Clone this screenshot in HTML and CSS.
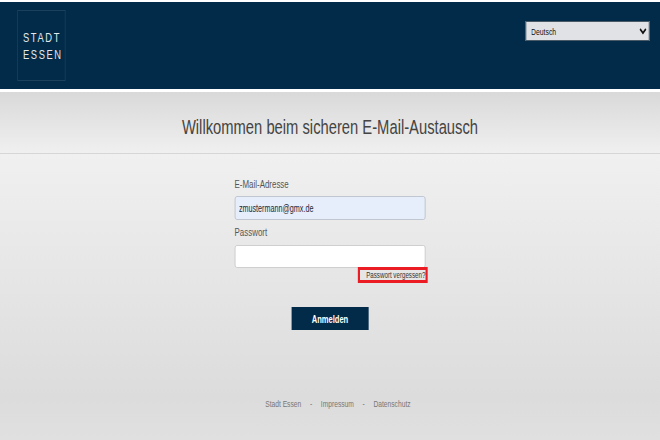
FILE: index.html
```html
<!DOCTYPE html>
<html>
<head>
    <meta charset="utf-8">
    <title>Stadt Essen - Sicherer E-Mail-Austausch</title>
    <link rel="stylesheet" href="styles.css">
</head>
<body>
<div class="page">
    <header class="header">
        <div class="logo">
            <span>STADT</span>
            <span>ESSEN</span>
        </div>
        <select class="language">
            <option>Deutsch</option>
        </select>
    </header>
    <main class="content">
        <h1 class="title">Willkommen beim sicheren E-Mail-Austausch</h1>
        <form class="login">
            <label class="label" for="email">E-Mail-Adresse</label>
            <input class="field field-filled" id="email" type="text" value="zmustermann@gmx.de">
            <label class="label label-password" for="password">Passwort</label>
            <input class="field field-password" id="password" type="password">
            <div class="forgot-row">
                <a class="forgot" href="#">Passwort vergessen?</a>
            </div>
            <button class="submit" type="button">Anmelden</button>
        </form>
        <footer class="footer">
            <a href="#">Stadt Essen</a>
            <span>-</span>
            <a href="#">Impressum</a>
            <span>-</span>
            <a href="#">Datenschutz</a>
        </footer>
    </main>
</div>
</body>
</html>
```

FILE: styles.css
```css
* {
    box-sizing: border-box;
}
html, body {
    width: 660px;
    height: 440px;
    overflow: hidden;
}
body {
    margin: 0;
    background: #fff;
    font-family: "Liberation Sans", Arial, sans-serif;
}
/* the whole shot is squeezed horizontally, so the page is wider and gets scaled */
.page {
    display: flex;
    flex-direction: column;
    width: 916.6px;
    height: 440px;
    transform: scaleX(.72);
    transform-origin: 0 0;
}
.header {
    flex: none;
    display: flex;
    justify-content: space-between;
    align-items: flex-start;
    height: 87px;
    margin-top: 2px;
    padding: 8px 15px 0 24px;
    background: #012b49;
}
.logo {
    display: flex;
    flex-direction: column;
    justify-content: center;
    gap: 3.5px;
    width: 67px;
    height: 71px;
    padding: 1px 0 0 7px;
    border: 1px solid #1b415d;
    color: #e3e8ec;
    font-size: 13px;
    line-height: 13px;
    letter-spacing: 2.2px;
}
.language {
    width: 172px;
    height: 20px;
    margin-top: 11px;
    padding: 0 0 0 3px;
    border: 1px solid #4a5a66;
    border-radius: 0;
    background: #e1e2e6;
    color: #111;
    font-family: "Liberation Sans", Arial, sans-serif;
    font-size: 9.5px;
}
.content {
    flex: 1;
    display: flex;
    flex-direction: column;
    align-items: center;
    margin-top: 3px;
    background: linear-gradient(to bottom, #d9d9d9 0, #f0f0f0 62px, #dcdcdc 305px, #e0e0e0 100%);
}
.title {
    align-self: stretch;
    height: 62px;
    margin: 0;
    padding-top: 23px;
    border-bottom: 1px solid #d6d6d6;
    color: #444;
    font-size: 20.5px;
    font-weight: normal;
    line-height: 24px;
    text-align: center;
}
.login {
    display: flex;
    flex-direction: column;
    width: 265px;
    margin-top: 24px;
}
.label {
    color: #555;
    font-size: 11px;
    line-height: 13px;
}
.label-password {
    margin-top: 6px;
}
.field {
    width: 265px;
    height: 24px;
    margin-top: 5px;
    padding: 0 5px;
    border: 1px solid #c8c8c8;
    border-radius: 3px;
    background: #fff;
    color: #1a2a3a;
    font-family: "Liberation Sans", Arial, sans-serif;
    font-size: 10px;
}
.field-filled {
    background: #e6eefb;
    border-color: #b9c0cb;
}
.field-password {
    height: 23px;
    margin-top: 6px;
}
.forgot-row {
    display: flex;
    justify-content: flex-end;
    height: 15px;
    margin-right: -3px;
}
.forgot {
    width: 97px;
    height: 16px;
    margin-top: -1px;
    border: 3px solid #ec1c24;
    color: #333;
    font-size: 8.6px;
    line-height: 10px;
    text-align: right;
    text-decoration: none;
    white-space: nowrap;
}
.submit {
    align-self: center;
    width: 107px;
    height: 23px;
    margin-top: 24px;
    border: 0;
    background: #012b49;
    color: #fff;
    font-family: "Liberation Sans", Arial, sans-serif;
    font-size: 10.5px;
    font-weight: bold;
}
.footer {
    display: flex;
    gap: 12px;
    margin-top: 69px;
    padding-left: 22px;
    color: #777;
    font-size: 9.3px;
    line-height: 10px;
}
.footer a {
    color: #777;
    text-decoration: none;
}
```
